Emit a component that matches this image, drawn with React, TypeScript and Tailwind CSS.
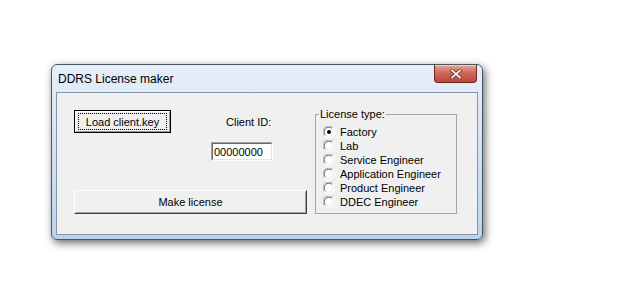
import React from "react";

const font = { fontFamily: '"Liberation Sans", Arial, sans-serif' };

const licenseTypes = [
  "Factory",
  "Lab",
  "Service Engineer",
  "Application Engineer",
  "Product Engineer",
  "DDEC Engineer",
];

function Radio({ checked }: { checked?: boolean }) {
  return (
    <svg width="12" height="12" viewBox="0 0 12 12" className="shrink-0">
      <circle cx="6" cy="6" r="5.5" fill="#ffffff" />
      {/* outer etched ring */}
      <path d="M1.6 9.8 A5.5 5.5 0 0 1 9.8 1.6" fill="none" stroke="#a0a0a0" strokeWidth="1" />
      <path d="M2.6 8.9 A4.3 4.3 0 0 1 8.9 2.6" fill="none" stroke="#696969" strokeWidth="1" />
      <path d="M9.8 1.6 A5.5 5.5 0 0 1 1.6 9.8" fill="none" stroke="#ffffff" strokeWidth="1" />
      <path d="M8.9 2.6 A4.3 4.3 0 0 1 2.6 8.9" fill="none" stroke="#e3e3e3" strokeWidth="1" />
      {checked && <circle cx="6" cy="6" r="2" fill="#000000" />}
    </svg>
  );
}

function CloseButton() {
  return (
    <div className="ml-auto mr-[5px] self-start flex h-[18px] w-[43px] items-center justify-center rounded-b-[4px] border border-t-0 border-[#6d2a22] bg-gradient-to-b from-[#e3a596] via-[#cf6553] to-[#b9493a] shadow-[inset_0_1px_0_rgba(255,255,255,0.5)]">
      <svg width="12" height="10" viewBox="0 0 12 10">
        <path d="M2 1.5 L10 8.5 M10 1.5 L2 8.5" stroke="#6a3a34" strokeWidth="3.6" strokeLinecap="square" />
        <path d="M2 1.5 L10 8.5 M10 1.5 L2 8.5" stroke="#f4f4f4" strokeWidth="1.8" strokeLinecap="square" />
      </svg>
    </div>
  );
}

export default function App() {
  return (
    <div className="h-[305px] w-[626px] overflow-hidden bg-white pl-[51px] pt-[64px]" style={font}>
      {/* window */}
      <div className="flex h-[176px] w-[432px] flex-col rounded-[6px] border border-[#4b5663] bg-gradient-to-b from-[#e6eef8] via-[#d3e2f3] to-[#bcd3ee] shadow-[2px_3px_9px_rgba(0,0,0,0.6)]">
        {/* title bar */}
        <div className="flex h-[27px] shrink-0 items-start">
          <span className="pl-[6px] pt-[6px] text-[12px] leading-[16px] text-black">DDRS License maker</span>
          <CloseButton />
        </div>

        {/* client area */}
        <div className="mx-[4px] mb-[4px] flex flex-1 border border-[#8595a8] bg-[#f0f0f0] text-[11px] leading-[14px] text-black">
          {/* left column */}
          <div className="ml-[17px] mt-[17px] flex w-[233px] flex-col">
            <div className="flex items-center">
              <button className="h-[23px] w-[97px] border border-black bg-[#f0f0f0] p-0">
                <div className="flex h-full w-full items-center justify-center border-t border-l border-t-white border-l-white border-b border-r border-b-[#a0a0a0] border-r-[#a0a0a0]">
                  <div className="flex h-[15px] w-[87px] items-center justify-center outline outline-1 outline-dotted outline-black">
                    Load client.key
                  </div>
                </div>
              </button>
              <span className="ml-[55px]">Client ID:</span>
            </div>

            <div className="ml-[137px] mt-[9px] h-[19px] w-[62px] border border-t-[#a0a0a0] border-l-[#a0a0a0] border-b-white border-r-white">
              <div className="flex h-full w-full items-center border border-t-[#696969] border-l-[#696969] border-b-[#e3e3e3] border-r-[#e3e3e3] bg-white pl-[1px]">
                00000000
              </div>
            </div>

            <button className="mt-[29px] h-[24px] w-[233px] border border-t-white border-l-white border-b-[#404040] border-r-[#404040] bg-[#f0f0f0] p-0">
              <div className="flex h-full w-full items-center justify-center border border-t-[#f0f0f0] border-l-[#f0f0f0] border-b-[#a0a0a0] border-r-[#a0a0a0]">
                Make license
              </div>
            </button>
          </div>

          {/* group box */}
          <fieldset className="ml-[8px] mt-[15px] h-[106px] w-[142px] border border-[#a5a5a5]">
            <legend className="ml-[3px] px-[1px] text-[11px] leading-[13px]">License type:</legend>
            <div className="mt-[4px] flex flex-col pl-[7px]">
              {licenseTypes.map((t, i) => (
                <div key={t} className="flex h-[14px] items-center gap-[5px]">
                  <Radio checked={i === 0} />
                  <span>{t}</span>
                </div>
              ))}
            </div>
          </fieldset>
        </div>
      </div>
    </div>
  );
}
